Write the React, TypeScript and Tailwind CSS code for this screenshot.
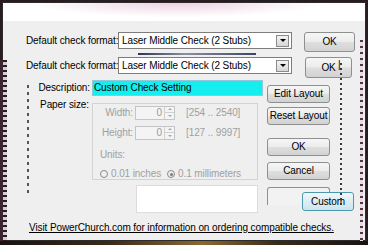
import React from "react"

// Win7-ish push button
function Btn({ children, className = "" }: { children: React.ReactNode; className?: string }) {
  return (
    <div
      className={`flex items-center justify-center whitespace-nowrap rounded-[3px] border border-[#8e8f8f] bg-[linear-gradient(to_bottom,#f6f6f6_0%,#ececec_48%,#dedede_52%,#d2d2d2_100%)] text-[10px] leading-none text-black ${className}`}
    >
      {children}
    </div>
  )
}

function Combo() {
  return (
    <div className="flex h-[17px] w-[174px] items-center border border-[#7d7d7d] bg-white pl-[3px] pr-[2px]">
      <span className="flex-1 whitespace-nowrap text-[10px] leading-none">Laser Middle Check (2 Stubs)</span>
      <div className="flex h-[12px] w-[13px] items-center justify-center border border-[#8a8a8a] bg-[linear-gradient(to_bottom,#f4f4f4,#d6d6d6)]">
        <div className="h-0 w-0 border-x-[3px] border-t-[3px] border-x-transparent border-t-black" />
      </div>
    </div>
  )
}

function Spin() {
  return (
    <div className="flex h-[14px] w-[40px] items-stretch border border-[#c4c4c4] bg-[#f4f4f4]">
      <span className="flex-1 pr-[2px] text-right text-[10px] leading-[12px] text-[#9a9a9a]">0</span>
      <div className="flex w-[10px] flex-col border-l border-[#d0d0d0]">
        <div className="flex flex-1 items-center justify-center border-b border-[#d0d0d0]">
          <div className="h-0 w-0 border-x-[2px] border-b-[2px] border-x-transparent border-b-[#a8a8a8]" />
        </div>
        <div className="flex flex-1 items-center justify-center">
          <div className="h-0 w-0 border-x-[2px] border-t-[2px] border-x-transparent border-t-[#a8a8a8]" />
        </div>
      </div>
    </div>
  )
}

function Radio({ on = false }: { on?: boolean }) {
  return (
    <div className="flex h-[8px] w-[8px] items-center justify-center rounded-full border-[1.5px] border-[#8a8a8a]">
      {on ? <div className="h-[3px] w-[3px] rounded-full bg-[#7a7a7a]" /> : null}
    </div>
  )
}

export default function App() {
  return (
    <div className="relative h-[245px] w-[368px] overflow-hidden whitespace-nowrap bg-[#2a1b22] font-['Liberation_Sans',Arial,sans-serif] text-[10px] tracking-[-0.1px] text-black">
      {/* dialog window */}
      <div className="ml-[2px] mt-[2px] flex h-[239px] w-[364px] flex-col border border-[#2c2c2c] bg-[#efefef]">
        <div className="h-[18px] bg-[radial-gradient(ellipse_at_48%_0%,#ecd2e2_0%,#ffffff_55%)]" />

        {/* default format rows */}
        <div className="mt-[11px] flex items-start pl-[23px]">
          <span className="w-[92px] pt-[3px] leading-[12px]">Default check format:</span>
          <Combo />
          <Btn className="ml-[12px] h-[20px] w-[51px]">OK</Btn>
        </div>
        <div className="ml-[135px] mt-[1px] h-[2px] w-[118px] bg-[linear-gradient(to_right,#2c3550,#8a8fa8_40%,#3a4466)]" />
        <div className="mt-[2px] flex items-start pl-[23px]">
          <span className="w-[92px] pt-[3px] leading-[12px]">Default check format:</span>
          <Combo />
          <Btn className="ml-[13px] h-[21px] w-[47px]">OK</Btn>
          <span className="ml-[-14px] mt-[3px] leading-[10px]">|</span>
        </div>

        {/* layout section */}
        <div className="mt-[2px] flex">
          <div className="flex w-[87px] flex-col items-end">
            <span className="leading-[16px]">Description:</span>
            <span className="mr-[1px] mt-[3px] leading-[12px]">Paper size:</span>
          </div>
          <div className="ml-[2px] flex w-[171px] flex-col">
            <div className="flex h-[16px] items-center border border-[#8fc8d8] bg-[#14eeee] pl-[1px] leading-none">
              Custom Check Setting
            </div>
            <div className="mt-[7px] flex h-[77px] w-[166px] flex-col border border-[#d3d3d3] pt-[1px] text-[#a0a0a0]">
              <div className="flex items-center">
                <span className="w-[40px] text-right">Width:</span>
                <div className="ml-[2px]"><Spin /></div>
                <span className="ml-[11px]">[254 .. 2540]</span>
              </div>
              <div className="mt-[5px] flex items-center">
                <span className="w-[40px] text-right">Height:</span>
                <div className="ml-[2px]"><Spin /></div>
                <span className="ml-[11px]">[127 .. 9997]</span>
              </div>
              <span className="ml-[7px] mt-[9px] leading-[12px]">Units:</span>
              <div className="ml-[7px] mt-[7px] flex items-center">
                <Radio />
                <span className="ml-[3px] leading-[12px]">0.01 inches</span>
                <div className="ml-[6px]"><Radio on /></div>
                <span className="ml-[3px] leading-[12px]">0.1 millimeters</span>
              </div>
            </div>
            <div className="ml-[44px] mt-[5px] h-[28px] w-[122px] border border-[#dcdcdc] bg-white" />
          </div>
          <div className="ml-[4px] flex w-[63px] flex-col pt-[5px]">
            <Btn className="h-[18px]">Edit Layout</Btn>
            <Btn className="mt-[4px] h-[18px]">Reset Layout</Btn>
            <Btn className="mt-[13px] h-[18px]">OK</Btn>
            <Btn className="mt-[6px] h-[18px]">Cancel</Btn>
            <div className="relative mt-[7px] h-[18px] rounded-t-[3px] border border-b-0 border-[#8e8f8f] bg-[#f2f2f2]">
              <div className="absolute left-[34px] top-[4px] flex h-[19px] w-[52px] items-center justify-center rounded-[3px] border border-[#4f97ad] bg-[linear-gradient(to_bottom,#f1f8fb,#dcedf4_50%,#cde5ef)] leading-none">
                Custom
              </div>
            </div>
          </div>
        </div>

        <span className="ml-[26px] mt-[9px] leading-[12px] underline">
          Visit PowerChurch.com for information on ordering compatible checks.
        </span>
      </div>

      {/* glitch strips and ruler dots laid over the dialog */}
      <div className="absolute left-[27px] top-[85px] h-[110px] w-[2px] bg-[repeating-linear-gradient(to_bottom,#555_0px,#555_3px,transparent_3px,transparent_7px)]" />
      <div className="absolute left-[340px] top-[63px] h-[142px] w-[2px] bg-[repeating-linear-gradient(to_bottom,#3a3a3a_0px,#3a3a3a_2px,transparent_2px,transparent_5px)]" />
      <div className="absolute left-0 top-[60px] h-[182px] w-[3px] bg-[#3a2530]" />
      <div className="absolute left-[3px] top-[60px] h-[182px] w-[4px] bg-[repeating-linear-gradient(to_bottom,#2a1a20_0px,#2a1a20_2px,#d6cfd2_2px,#d6cfd2_5px)]" />
      <div className="absolute left-[360px] top-[40px] h-[202px] w-[3px] bg-[repeating-linear-gradient(to_bottom,#5a3248_0px,#5a3248_2px,#e4dde1_2px,#e4dde1_6px)]" />
      <div className="absolute bottom-0 left-0 h-[4px] w-[368px] bg-[linear-gradient(to_right,#1a1210,#3b2a18_30%,#8a6a30_55%,#3b2a18_75%,#1a1210)]" />
    </div>
  )
}
